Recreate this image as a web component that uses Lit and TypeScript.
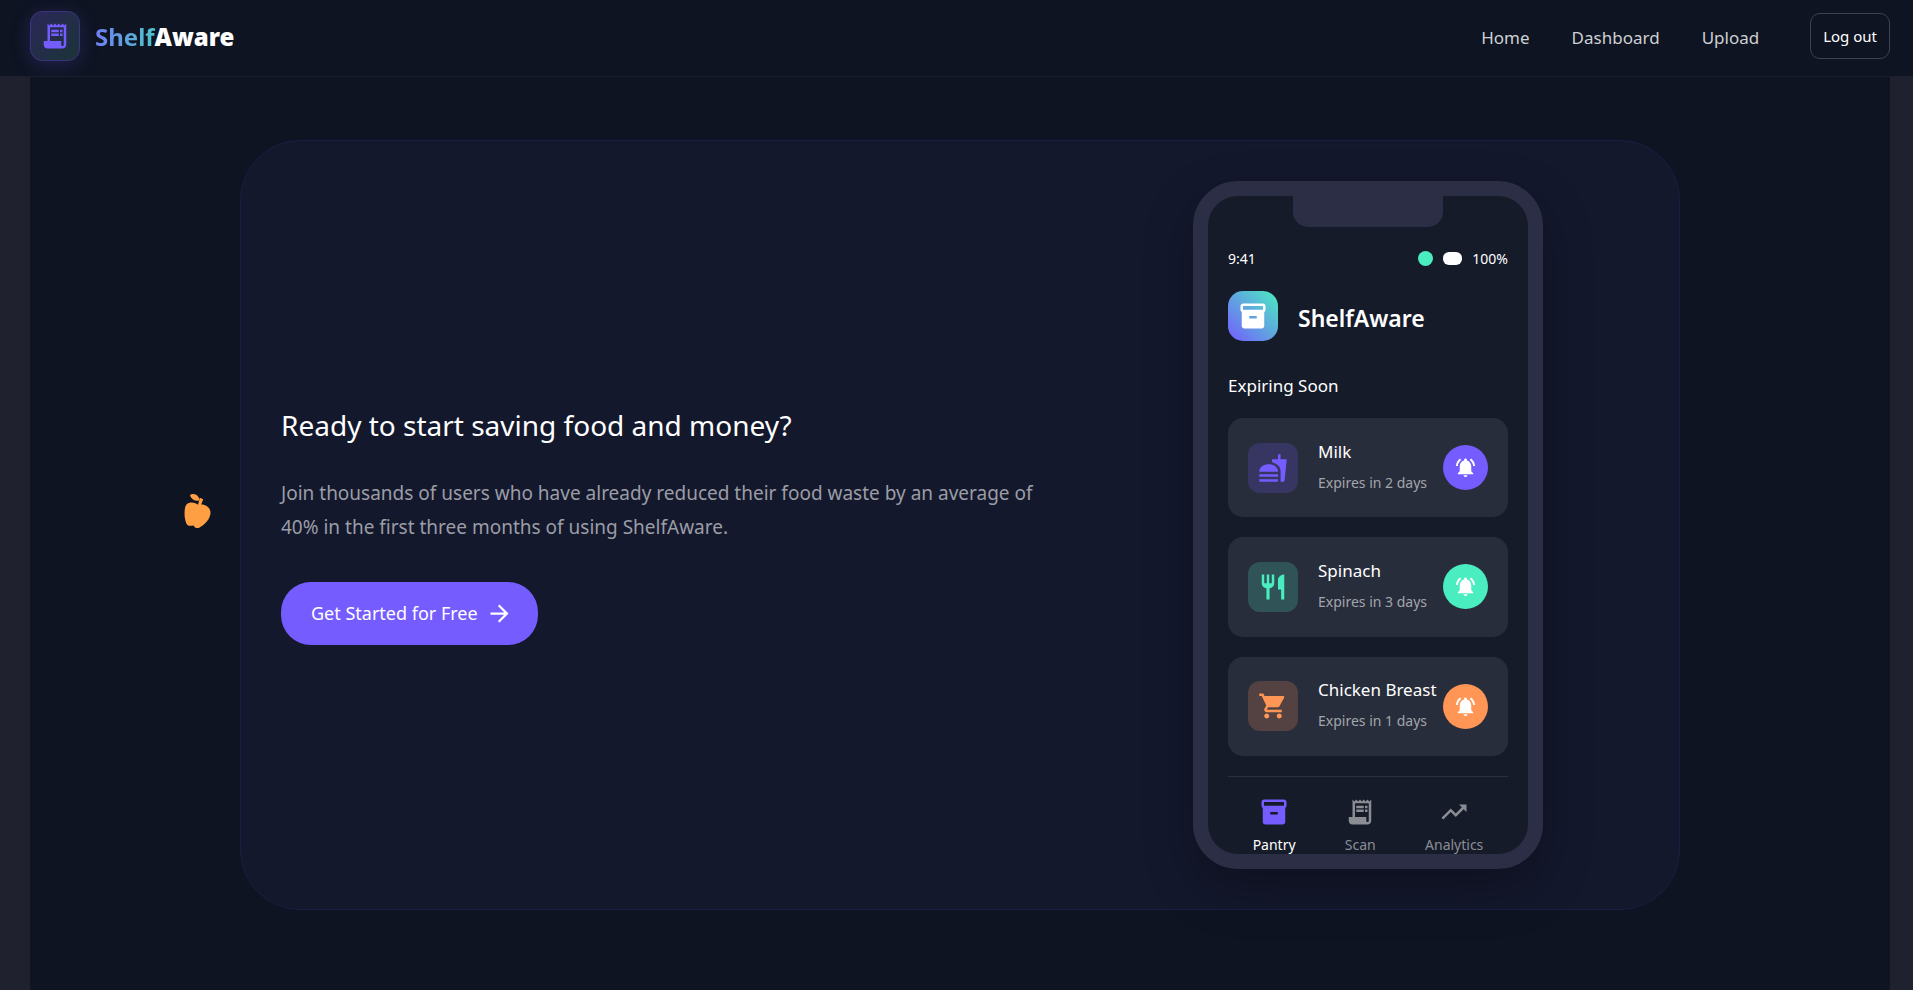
import { LitElement, html, css, svg } from "lit";
import { customElement, property } from "lit/decorators.js";

const ICONS: Record<string, string> = {
  receipt:
    "M19.5 3.5 18 2l-1.5 1.5L15 2l-1.5 1.5L12 2l-1.5 1.5L9 2 7.5 3.5 6 2v14H3v3c0 1.66 1.34 3 3 3h12c1.66 0 3-1.34 3-3V2l-1.5 1.5zM19 19c0 .55-.45 1-1 1s-1-.45-1-1v-3H8V5h11v14zM9 7h6v2H9zM16 7h2v2h-2zM9 10h6v2H9zM16 10h2v2h-2z",
  inventory:
    "M20 2H4c-1 0-2 .9-2 2v3.01c0 .72.43 1.34 1 1.69V20c0 1.1 1.1 2 2 2h14c.9 0 2-.9 2-2V8.7c.57-.35 1-.97 1-1.69V4c0-1.1-1-2-2-2zm-5 12H9v-2h6v2zm5-7H4V4l16-.02V7z",
  fastfood:
    "M18.06 22.99h1.66c.84 0 1.53-.64 1.63-1.46L23 5.05h-5V1h-1.97v4.05h-4.97l.3 2.34c1.71.47 3.31 1.32 4.27 2.26 1.44 1.42 2.43 2.89 2.43 5.29v8.05zM1 21.99V21h15.03v.99c0 .55-.45 1-1.01 1H2.01c-.56 0-1.01-.45-1.01-1zm15.03-7c0-8-15.03-8-15.03 0h15.03zM1.02 17h15v2h-15z",
  restaurant:
    "M11 9H9V2H7v7H5V2H3v7c0 2.12 1.66 3.84 3.75 3.97V22h2.5v-9.03C11.34 12.84 13 11.12 13 9V2h-2v7zm5-3v8h2.5v8H21V2c-2.76 0-5 2.24-5 4z",
  cart:
    "M7 18c-1.1 0-1.99.9-1.99 2S5.9 22 7 22s2-.9 2-2-.9-2-2-2zM1 2v2h2l3.6 7.59-1.35 2.45c-.16.28-.25.61-.25.96 0 1.1.9 2 2 2h12v-2H7.42c-.14 0-.25-.11-.25-.25l.03-.12.9-1.63h7.45c.75 0 1.41-.41 1.75-1.03l3.58-6.49c.08-.14.12-.31.12-.48 0-.55-.45-1-1-1H5.21l-.94-2H1zm16 16c-1.1 0-1.99.9-1.99 2s.89 2 1.99 2 2-.9 2-2-.9-2-2-2z",
  bell:
    "M7.58 4.08 6.15 2.65C3.75 4.48 2.17 7.3 2.03 10.5h2c.15-2.65 1.51-4.97 3.55-6.42zm12.39 6.42h2c-.15-3.2-1.73-6.02-4.12-7.85l-1.42 1.43c2.02 1.45 3.39 3.77 3.54 6.42zM18 11c0-3.07-1.64-5.64-4.5-6.32V4c0-.83-.67-1.5-1.5-1.5s-1.5.67-1.5 1.5v.68C7.63 5.36 6 7.92 6 11v5l-2 2v1h16v-1l-2-2v-5zm-6 11c.14 0 .27-.01.4-.04.65-.14 1.18-.58 1.44-1.18.1-.24.15-.5.15-.78h-4c.01 1.1.9 2 2.01 2z",
  trend:
    "m16 6 2.29 2.29-4.88 4.88-4-4L2 16.59 3.41 18l6-6 4 4 6.3-6.29L22 12V6z",
  arrow:
    "m12 4-1.41 1.41L16.17 11H4v2h12.17l-5.58 5.59L12 20l8-8z",
};

@customElement("app-icon")
class AppIcon extends LitElement {
  @property() name = "receipt";

  static styles = css`
    :host {
      display: inline-flex;
      width: 30px;
      height: 30px;
    }
    svg {
      width: 100%;
      height: 100%;
      fill: currentColor;
    }
  `;

  render() {
    return html`<svg viewBox="0 0 24 24" aria-hidden="true">
      ${svg`<path d=${ICONS[this.name]}></path>`}
    </svg>`;
  }
}

interface PantryItem {
  name: string;
  days: number;
  icon: string;
  tone: string;
}

const ITEMS: PantryItem[] = [
  { name: "Milk", days: 2, icon: "fastfood", tone: "violet" },
  { name: "Spinach", days: 3, icon: "restaurant", tone: "mint" },
  { name: "Chicken Breast", days: 1, icon: "cart", tone: "orange" },
];

@customElement("phone-preview")
class PhonePreview extends LitElement {
  static styles = css`
    :host {
      display: block;
    }
    * {
      box-sizing: border-box;
    }
    .phone {
      position: relative;
      width: 350px;
      height: 688px;
      padding: 0 20px;
      border: 15px solid #2b2e44;
      border-radius: 45px;
      background: #161b2a;
      box-shadow: 0 20px 50px rgba(0, 0, 0, 0.3);
      overflow: hidden;
      color: #fff;
    }
    .notch {
      width: 150px;
      height: 31px;
      margin: 0 auto;
      border-radius: 0 0 15px 15px;
      background: #2b2e44;
    }
    .status {
      display: flex;
      align-items: center;
      height: 30px;
      margin-top: 16px;
      font-size: 14px;
    }
    .signals {
      display: flex;
      align-items: center;
      gap: 10px;
      margin-left: auto;
    }
    .wifi {
      width: 15px;
      height: 15px;
      border-radius: 50%;
      background: #4aedc0;
    }
    .battery {
      width: 19px;
      height: 13px;
      border-radius: 6px;
      background: #fff;
    }
    .brand {
      display: flex;
      align-items: center;
      gap: 20px;
      height: 50px;
      margin-top: 18px;
    }
    .mark {
      display: grid;
      place-items: center;
      width: 50px;
      height: 50px;
      border-radius: 15px;
      background: linear-gradient(45deg, #755cff, #4aedc0);
    }
    .title {
      margin: 0;
      padding-top: 4px;
      font-size: 23px;
      font-weight: 600;
      line-height: 32px;
    }
    .subtitle {
      margin: 30px 0 18px;
      font-size: 17px;
      font-weight: 400;
      line-height: 29px;
    }
    .list {
      display: flex;
      flex-direction: column;
      gap: 20px;
      height: 338px;
      margin: 0 0 20px;
      padding: 0;
      list-style: none;
    }
    .item {
      display: flex;
      flex: 1;
      align-items: center;
      padding: 0 20px;
      border-radius: 15px;
      background: #282d3c;
    }
    .thumb {
      display: grid;
      place-items: center;
      flex: none;
      width: 50px;
      height: 50px;
      margin-right: 20px;
      border-radius: 12px;
    }
    .text {
      flex: 1;
      min-width: 0;
      padding-bottom: 2px;
      white-space: nowrap;
    }
    .name {
      margin: 0;
      font-size: 17px;
      line-height: 32px;
    }
    .expiry {
      margin: 0;
      font-size: 14px;
      line-height: 30px;
      color: #a2a5ab;
    }
    .alert {
      display: grid;
      place-items: center;
      flex: none;
      width: 45px;
      height: 45px;
      padding: 0;
      border: 0;
      border-radius: 50%;
      color: #fff;
    }
    .alert app-icon {
      width: 23px;
      height: 23px;
    }
    .violet .thumb {
      color: #755cff;
      background: #373662;
    }
    .mint .thumb {
      color: #4aedc0;
      background: #2f5356;
    }
    .orange .thumb {
      color: #ff9655;
      background: #534241;
    }
    .violet .alert {
      background: #755cff;
    }
    .mint .alert {
      background: #4aedc0;
    }
    .orange .alert {
      background: #ff9655;
    }
    .tabs {
      display: flex;
      justify-content: space-around;
      padding-top: 20px;
      border-top: 1px solid #2d313e;
    }
    .tab {
      display: flex;
      flex-direction: column;
      align-items: center;
      gap: 6px;
      padding: 0;
      border: 0;
      background: none;
      font: inherit;
      font-size: 14px;
      line-height: 24px;
      color: #8b8d95;
    }
    .tab.active {
      color: #fff;
    }
    .active app-icon {
      color: #755cff;
    }
  `;

  render() {
    return html`
      <div class="phone">
        <div class="notch"></div>
        <div class="status">
          <span>9:41</span>
          <div class="signals">
            <span class="wifi"></span>
            <span class="battery"></span>
            <span>100%</span>
          </div>
        </div>
        <div class="brand">
          <span class="mark"><app-icon name="inventory"></app-icon></span>
          <h3 class="title">ShelfAware</h3>
        </div>
        <h4 class="subtitle">Expiring Soon</h4>
        <ul class="list">
          ${ITEMS.map(
            (item) => html`
              <li class="item ${item.tone}">
                <span class="thumb"><app-icon name=${item.icon}></app-icon></span>
                <div class="text">
                  <p class="name">${item.name}</p>
                  <p class="expiry">Expires in ${item.days} days</p>
                </div>
                <button class="alert" type="button" aria-label="Remind me about ${item.name}">
                  <app-icon name="bell"></app-icon>
                </button>
              </li>
            `
          )}
        </ul>
        <div class="tabs">
          <button class="tab active" type="button">
            <app-icon name="inventory"></app-icon>Pantry
          </button>
          <button class="tab" type="button">
            <app-icon name="receipt"></app-icon>Scan
          </button>
          <button class="tab" type="button">
            <app-icon name="trend"></app-icon>Analytics
          </button>
        </div>
      </div>
    `;
  }
}

@customElement("app-root")
class AppRoot extends LitElement {
  static styles = css`
    :host {
      display: flex;
      flex-direction: column;
      min-height: 100vh;
      background: #20212f;
      color: #fff;
      font-family: "Noto Sans", "Open Sans", sans-serif;
    }
    * {
      box-sizing: border-box;
    }
    a {
      color: inherit;
      text-decoration: none;
    }
    .header {
      display: flex;
      align-items: center;
      justify-content: space-between;
      height: 77px;
      padding: 0 23px 4px 30px;
      border-bottom: 1px solid #1b1f2f;
      background: #0e1422;
    }
    .logo {
      display: flex;
      align-items: center;
      gap: 15px;
      font-size: 24px;
      font-weight: 900;
    }
    .badge {
      display: grid;
      place-items: center;
      width: 50px;
      height: 50px;
      border: 1px solid #3b357e;
      border-radius: 12px;
      background: linear-gradient(135deg, #2c2759, #1a3438);
      box-shadow: 0 4px 20px rgba(117, 92, 255, 0.2);
      color: #755cff;
    }
    .tint {
      font-weight: 700;
      background: linear-gradient(90deg, #6f7df0, #4fc4cb);
      background-clip: text;
      -webkit-background-clip: text;
      color: transparent;
    }
    .nav {
      display: flex;
      align-items: center;
      gap: 42px;
      font-size: 17px;
      color: #cfd0d3;
    }
    .nav a {
      padding-top: 2px;
    }
    .logout {
      height: 46px;
      margin-left: 9px;
      padding: 0 12px;
      border: 1px solid #3e424e;
      border-radius: 10px;
      background: none;
      font: inherit;
      font-size: 15px;
      color: #fff;
    }
    .main {
      flex: 1;
      margin: 0 23px 0 30px;
      padding: 63px 0 80px;
      background: #0e1422;
    }
    .cta {
      position: relative;
      display: grid;
      grid-template-columns: minmax(0, 1fr) minmax(350px, 542px);
      align-items: center;
      width: calc(100% - 60px);
      max-width: 1440px;
      margin: 0 auto;
      padding: 40px;
      border: 1px solid #1c1d42;
      border-radius: 60px;
      background: #14182d;
    }
    .copy {
      padding-right: 40px;
    }
    .heading {
      margin: 0 0 32px;
      font-size: 28px;
      font-weight: 400;
      line-height: 38px;
    }
    .lead {
      margin: 0 0 38px;
      font-size: 19px;
      line-height: 34px;
      color: #9b9da5;
    }
    .start {
      display: inline-flex;
      align-items: center;
      gap: 8px;
      height: 63px;
      padding: 0 25px 0 30px;
      border: 0;
      border-radius: 30px;
      background: #755cff;
      font: inherit;
      font-size: 18px;
      color: #fff;
    }
    .start app-icon {
      width: 27px;
      height: 27px;
    }
    .preview {
      justify-self: center;
    }
    .apple {
      position: absolute;
      left: -57px;
      top: 351px;
      width: 30px;
      height: 38px;
    }
  `;

  render() {
    return html`
      <header class="header">
        <a class="logo" href="#">
          <span class="badge"><app-icon name="receipt"></app-icon></span>
          <span><span class="tint">Shelf</span>Aware</span>
        </a>
        <nav class="nav">
          <a href="#home">Home</a>
          <a href="#dashboard">Dashboard</a>
          <a href="#upload">Upload</a>
          <button class="logout" type="button">Log out</button>
        </nav>
      </header>
      <main class="main">
        <section class="cta">
          <svg class="apple" viewBox="0 0 30 38" aria-hidden="true">
            <g fill="#ff9f43">
              <path d="M6 3.500C7.500 1.500 11.500 1.500 14 4.500C15.200 6 15.500 7.500 15 8.500C12 9.500 7.500 8 6 3.500z"></path>
              <path d="M15.800 5.800L19.200 7.200L16.800 13.500L14 13z"></path>
              <path d="M14.500 13C11 10 5.500 9.500 2.500 12.500C-0.500 16 0 29 3.500 33C5.500 34.500 7.500 33.500 9.500 33.500C11.500 37 14.500 36.500 17 34.500C21.500 32 26.500 26.500 26.500 20.500C26.500 15.500 20.500 11 14.500 13z"></path>
            </g>
          </svg>
          <div class="copy">
            <h2 class="heading">Ready to start saving food and money?</h2>
            <p class="lead">
              Join thousands of users who have already reduced their food waste by an average of
              40% in the first three months of using ShelfAware.
            </p>
            <button class="start" type="button">
              Get Started for Free <app-icon name="arrow"></app-icon>
            </button>
          </div>
          <phone-preview class="preview"></phone-preview>
        </section>
      </main>
    `;
  }
}
